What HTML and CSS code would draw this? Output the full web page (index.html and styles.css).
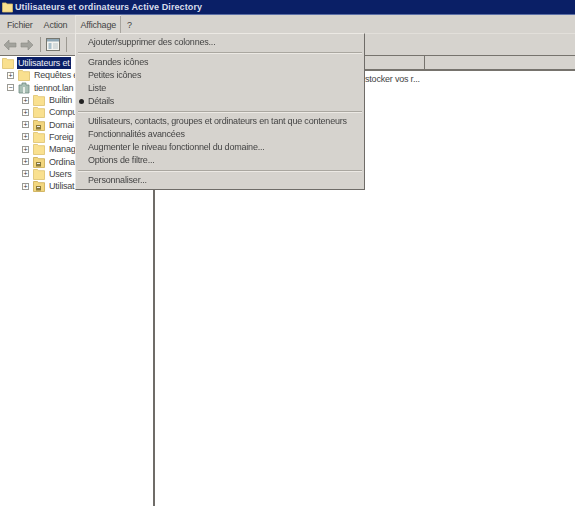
FILE: index.html
```html
<!DOCTYPE html>
<html lang="fr">
<head>
    <meta charset="UTF-8">
    <meta name="viewport" content="width=device-width, initial-scale=1.0">
    <title>Utilisateurs et ordinateurs Active Directory</title>
    <link rel="stylesheet" href="styles.css">
</head>
<body>
    <svg class="defs" width="0" height="0">
        <symbol id="folder" viewBox="0 0 12 12">
            <path d="M0.5 1.5h4l1 1.2h6v8.8h-11z" fill="#f9e08f" stroke="#dcc06c" stroke-width="0.8"/>
        </symbol>
        <symbol id="ou" viewBox="0 0 12 12">
            <path d="M0.5 1.5h4l1 1.2h6v8.8h-11z" fill="#f2d67e" stroke="#c9a94f" stroke-width="0.8"/>
            <rect x="3" y="6" width="5" height="4.5" fill="#8a7a3c"/>
            <rect x="4" y="7" width="3" height="1" fill="#eee"/>
        </symbol>
    </svg>

    <div class="window">
        <div class="titlebar">
            <svg class="title-icon" width="11" height="12"><use href="#folder"/></svg>
            <span>Utilisateurs et ordinateurs Active Directory</span>
        </div>

        <div class="menubar">
            <span class="menu-item">Fichier</span>
            <span class="menu-item">Action</span>
            <span class="menu-item menu-open">Affichage</span>
            <span class="menu-item">?</span>
        </div>

        <div class="toolbar">
            <svg width="14" height="12" viewBox="0 0 14 12"><path d="M1 6l5-5v3h7v4H6v3z" fill="#a3a39d" stroke="#8a8a84" stroke-width="0.6"/></svg>
            <svg width="14" height="12" viewBox="0 0 14 12"><path d="M13 6L8 1v3H1v4h7v3z" fill="#a3a39d" stroke="#8a8a84" stroke-width="0.6"/></svg>
            <span class="tool-sep"></span>
            <svg width="14" height="13" viewBox="0 0 14 13"><rect x="0.5" y="0.5" width="13" height="12" fill="#f4f4f0" stroke="#77776f"/><rect x="1" y="1" width="12" height="2.5" fill="#8fa7b5"/><rect x="2.5" y="5" width="3" height="6" fill="#a9c0cc"/><rect x="7" y="5" width="5" height="6" fill="#d6dcdc"/></svg>
            <span class="tool-sep"></span>
        </div>

        <div class="panes">
            <div class="tree">
                <div class="tree-row row-root">
                    <svg class="node-icon" width="12" height="12"><use href="#folder"/></svg>
                    <span class="selected">Utilisateurs et</span>
                </div>
                <div class="tree-row level-1">
                    <span class="toggle">+</span>
                    <svg class="node-icon" width="12" height="12"><use href="#folder"/></svg>
                    <span>Requêtes e</span>
                </div>
                <div class="tree-row level-1">
                    <span class="toggle">−</span>
                    <svg class="node-icon" width="12" height="12" viewBox="0 0 12 12"><path d="M1 3h3V1h4v2h3v8H1z" fill="#a9bfb5" stroke="#6f8a80" stroke-width="0.8"/><rect x="5" y="5" width="2" height="6" fill="#e8eee8"/></svg>
                    <span>tiennot.lan</span>
                </div>
                <div class="tree-row level-2"><span class="toggle">+</span><svg class="node-icon" width="12" height="12"><use href="#folder"/></svg><span>Builtin</span></div>
                <div class="tree-row level-2"><span class="toggle">+</span><svg class="node-icon" width="12" height="12"><use href="#folder"/></svg><span>Compu</span></div>
                <div class="tree-row level-2"><span class="toggle">+</span><svg class="node-icon" width="12" height="12"><use href="#ou"/></svg><span>Domai</span></div>
                <div class="tree-row level-2"><span class="toggle">+</span><svg class="node-icon" width="12" height="12"><use href="#folder"/></svg><span>Foreig</span></div>
                <div class="tree-row level-2"><span class="toggle">+</span><svg class="node-icon" width="12" height="12"><use href="#folder"/></svg><span>Manag</span></div>
                <div class="tree-row level-2"><span class="toggle">+</span><svg class="node-icon" width="12" height="12"><use href="#ou"/></svg><span>Ordina</span></div>
                <div class="tree-row level-2"><span class="toggle">+</span><svg class="node-icon" width="12" height="12"><use href="#folder"/></svg><span>Users</span></div>
                <div class="tree-row level-2"><span class="toggle">+</span><svg class="node-icon" width="12" height="12"><use href="#ou"/></svg><span>Utilisat</span></div>
            </div>

            <div class="details">
                <div class="list-header">
                    <span class="col col-name"></span>
                    <span class="col"></span>
                </div>
                <div class="list-text">stocker vos r...</div>
            </div>
        </div>

        <!-- Menu Affichage ouvert -->
        <div class="dropdown">
            <div class="dd-item">Ajouter/supprimer des colonnes...</div>
            <div class="dd-sep"></div>
            <div class="dd-item">Grandes icônes</div>
            <div class="dd-item">Petites icônes</div>
            <div class="dd-item">Liste</div>
            <div class="dd-item dd-checked">Détails</div>
            <div class="dd-sep"></div>
            <div class="dd-item">Utilisateurs, contacts, groupes et ordinateurs en tant que conteneurs</div>
            <div class="dd-item">Fonctionnalités avancées</div>
            <div class="dd-item">Augmenter le niveau fonctionnel du domaine...</div>
            <div class="dd-item">Options de filtre...</div>
            <div class="dd-sep"></div>
            <div class="dd-item">Personnaliser...</div>
        </div>
    </div>
</body>
</html>
```

FILE: styles.css
```css
/* General */
html, body {
    margin: 0;
    padding: 0;
}

body {
    font-family: "Liberation Sans", sans-serif;
    font-size: 9px;
    letter-spacing: -0.2px;
    color: #444;
    background-color: #fff;
    overflow: hidden;
}

.defs {
    position: absolute;
}

.window {
    position: relative;
    width: 575px;
    height: 506px;
    overflow: hidden;
    display: flex;
    flex-direction: column;
    filter: blur(0.4px);
}

/* Title bar */
.titlebar {
    height: 15px;
    background-color: #0a1f66;
    color: #d9deec;
    font-weight: 700;
    letter-spacing: 0.1px;
    display: flex;
    align-items: center;
    gap: 2px;
    padding-left: 2px;
    border-bottom: 1px solid #5b6ea5;
    box-sizing: border-box;
}

/* Menu bar */
.menubar {
    height: 18px;
    background-color: #d6d3ce;
    display: flex;
    align-items: center;
    padding-left: 2px;
}

.menu-item {
    padding: 0 5px;
    height: 18px;
    line-height: 20px;
}

.menu-item:nth-child(2) {
    margin-left: 1px;
}

.menu-item:nth-child(3) {
    margin-left: 3px;
}

.menu-item:nth-child(4) {
    margin-left: 1px;
}

.menu-open {
    background-color: #dad7d1;
    box-shadow: inset 1px 1px 0 #e6e3de, inset -1px 0 0 #a8a59f;
}

/* Toolbar */
.toolbar {
    height: 23px;
    background-color: #d6d3ce;
    border-top: 1px solid #e2dfda;
    border-bottom: 1px solid #76736d;
    box-sizing: border-box;
    display: flex;
    align-items: center;
    gap: 3px;
    padding-left: 3px;
}

.tool-sep {
    width: 1px;
    height: 15px;
    margin: 0 2px 0 3px;
    background-color: #9c9992;
}

/* Panes */
.panes {
    flex: 1;
    display: flex;
}

.tree {
    width: 153px;
    padding-top: 1px;
    background-color: #fff;
    border-right: 2px solid #6f6c68;
    white-space: nowrap;
}

.tree-row {
    height: 12.3px;
    display: flex;
    align-items: center;
    gap: 4px;
    line-height: 12px;
}

.row-root {
    padding-left: 2px;
    gap: 3px;
}

.level-1 {
    padding-left: 7px;
}

.level-2 {
    padding-left: 22px;
}

.node-icon, .toggle {
    flex-shrink: 0;
}

.selected {
    background-color: #0a1f66;
    color: #eef0f8;
    padding: 0 1px;
}

.toggle {
    width: 5px;
    height: 5px;
    border: 1px solid #9a9a94;
    font-size: 7px;
    line-height: 5px;
    text-align: center;
    color: #333;
}

.details {
    flex: 1;
    background-color: #fff;
}

.list-header {
    height: 13px;
    background-color: #d6d3ce;
    border-bottom: 2px solid #76736d;
    display: flex;
}

.col-name {
    width: 269px;
    border-right: 1px solid #76736d;
}

.list-text {
    padding: 1px 0 0 210px;
    line-height: 14px;
    white-space: nowrap;
}

/* Dropdown */
.dropdown {
    position: absolute;
    top: 33px;
    left: 75px;
    width: 290px;
    height: 157px;
    box-sizing: border-box;
    padding-top: 2px;
    background-color: #d6d3ce;
    border-top: 1px solid #ece9e4;
    border-left: 1px solid #ece9e4;
    border-right: 1px solid #6f6c68;
    border-bottom: 1px solid #6f6c68;
}

.dd-item {
    height: 13px;
    line-height: 13px;
    padding-left: 12px;
    position: relative;
    white-space: nowrap;
}

.dd-checked::before {
    content: "";
    position: absolute;
    left: 3px;
    top: 4px;
    width: 5px;
    height: 5px;
    border-radius: 50%;
    background-color: #222;
}

.dd-sep {
    height: 1px;
    margin: 3px 2px;
    background-color: #aaa7a0;
    box-shadow: 0 1px 0 #ece9e4;
}
```
